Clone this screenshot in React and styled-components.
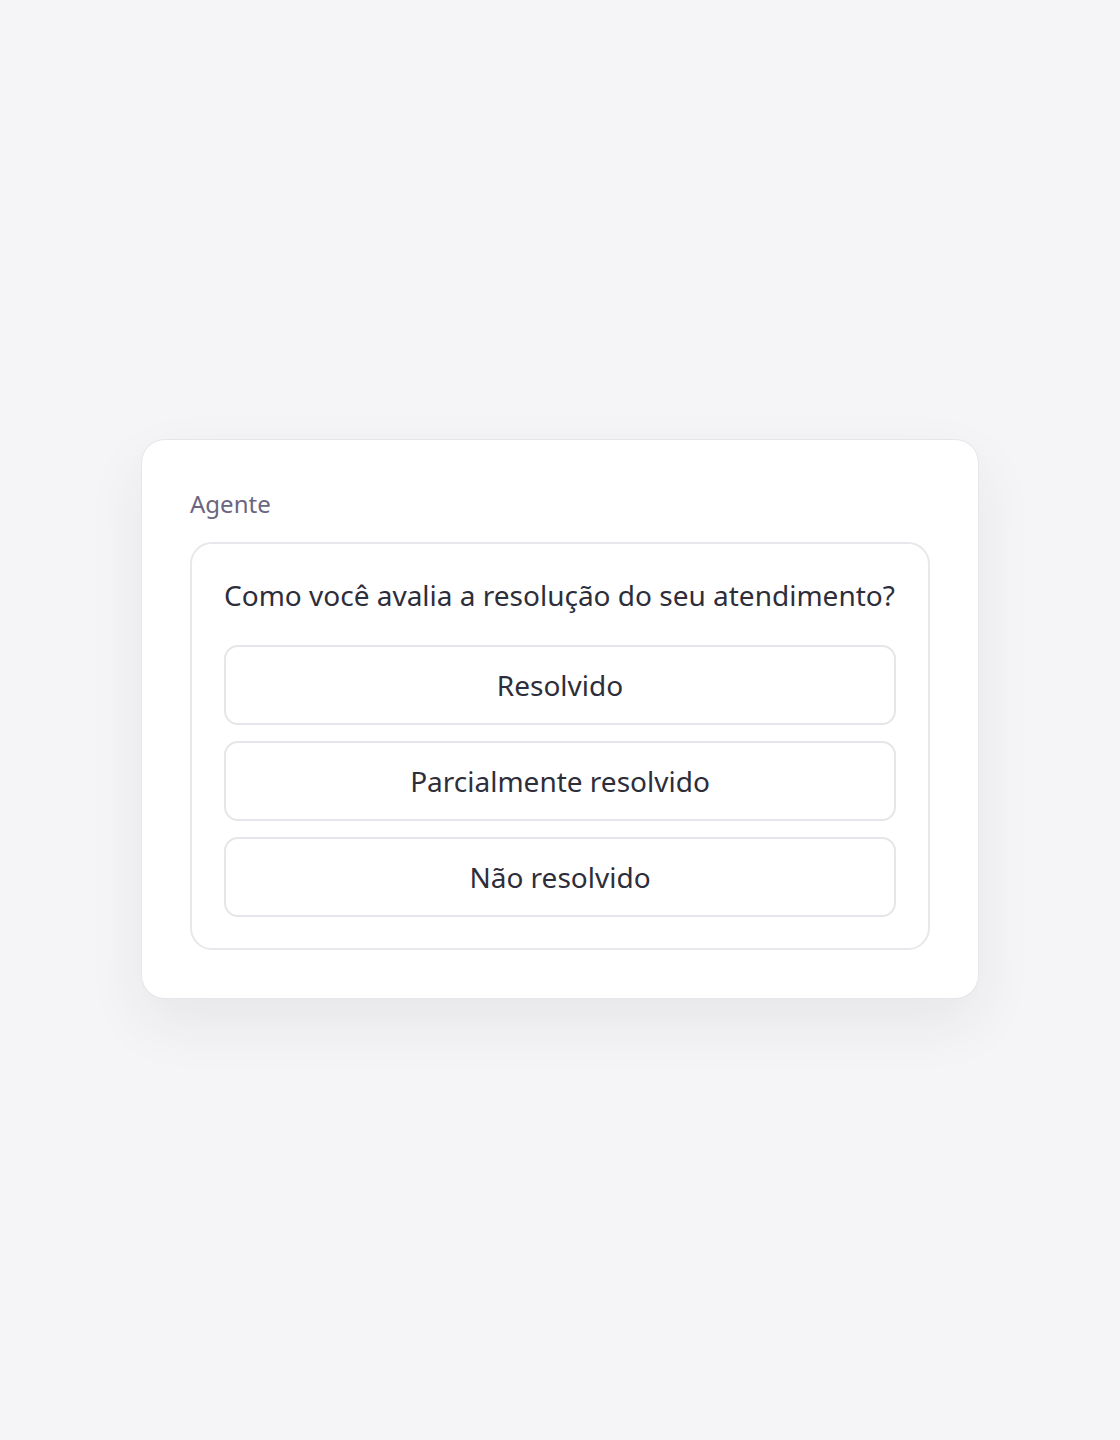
import styled, { createGlobalStyle } from 'styled-components'

const GlobalStyle = createGlobalStyle`
  html, body {
    margin: 0;
    padding: 0;
    background: #f5f5f7;
    font-family: "Noto Sans", "Open Sans", sans-serif;
  }
  * {
    box-sizing: border-box;
  }
`

const options = ['Resolvido', 'Parcialmente resolvido', 'Não resolvido']

function App() {
  return (
    <>
      <GlobalStyle />
      <Page>
        <Card>
          <Label>Agente</Label>
          <Survey>
            <Question>Como você avalia a resolução do seu atendimento?</Question>
            <OptionList>
              {options.map((option) => (
                <OptionButton key={option}>{option}</OptionButton>
              ))}
            </OptionList>
          </Survey>
        </Card>
      </Page>
    </>
  )
}

export default App

/////  Style  /////

const Page = styled.main`
  min-height: 1440px;
  display: flex;
  align-items: center;
  justify-content: center;
  padding-bottom: 2px;
`

const Card = styled.section`
  width: 838px;
  background: #ffffff;
  border: 1px solid #e6e6ea;
  border-radius: 24px;
  padding: 48px;
  box-shadow: 0 24px 60px rgba(40, 40, 60, 0.07);
`

const Label = styled.div`
  font-size: 24px;
  line-height: 32px;
  color: #6b6580;
  margin-bottom: 22px;
`

const Survey = styled.div`
  border: 2px solid #e8e8ec;
  border-radius: 22px;
  padding: 32px 32px 31px;
`

const Question = styled.p`
  margin: 0 0 31px;
  font-size: 28px;
  line-height: 38px;
  color: #2e2e3a;
`

const OptionList = styled.div`
  display: flex;
  flex-direction: column;
  gap: 16px;
`

const OptionButton = styled.button`
  height: 80px;
  width: 100%;
  background: #ffffff;
  border: 2px solid #e6e6ea;
  border-radius: 14px;
  font-family: inherit;
  font-size: 28px;
  color: #2e2e3a;
  cursor: pointer;
`
